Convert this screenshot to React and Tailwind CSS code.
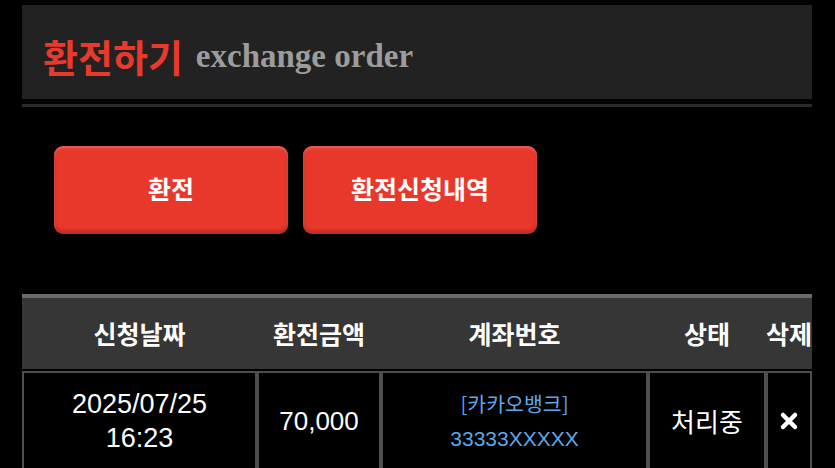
/**
 * ExchangeOrder — 환전하기 page with action buttons and request history table.
 */

const rows = [
  {
    id: 1,
    date: "2025/07/25",
    time: "16:23",
    amount: "70,000",
    bank: "[카카오뱅크]",
    account: "33333XXXXX",
    status: "처리중",
  },
];

const ko = "font-['Noto_Sans_CJK_KR','Noto_Sans',sans-serif]";
const latin = "font-['Liberation_Sans','Noto_Sans_CJK_KR',sans-serif]";

export default function App() {
  return (
    <div className="min-h-[468px] bg-black pt-[5px]">
      <div className="ml-[22px] w-[790px]">
        <div className="flex h-[94px] items-center bg-[#222222] pl-[21px] pt-[8px]">
          <span className={`${ko} text-[38px] font-bold leading-none text-[#e8392d]`}>
            환전하기
          </span>
          <span className="ml-[13px] font-['Liberation_Serif',serif] text-[33px] font-bold leading-none text-[#9c9c9c]">
            exchange order
          </span>
        </div>
        <div className="mt-[5px] h-[3px] bg-[#2c2c2c]" />

        <div className="mt-[39px] flex gap-[15px] pl-[32px]">
          <ActionButton>환전</ActionButton>
          <ActionButton>환전신청내역</ActionButton>
        </div>

        <HistoryTable rows={rows} />
      </div>
    </div>
  );
}

function ActionButton({ children }) {
  return (
    <button
      className={`${ko} flex h-[88px] w-[234px] items-center justify-center rounded-[9px] bg-[#e8382c] pb-[2px] text-[25px] font-bold text-white shadow-[inset_0_2px_3px_rgba(255,255,255,0.22),inset_0_-3px_4px_rgba(0,0,0,0.22)]`}
    >
      {children}
    </button>
  );
}

function HistoryTable({ rows }) {
  return (
    <table className="mt-[60px] w-[790px] table-fixed border-separate border-spacing-0">
      <colgroup>
        <col className="w-[235px]" />
        <col className="w-[124px]" />
        <col className="w-[267px]" />
        <col className="w-[118px]" />
        <col className="w-[46px]" />
      </colgroup>
      <thead>
        <tr className={`${ko} text-[25px] font-bold text-white`}>
          {["신청날짜", "환전금액", "계좌번호", "상태", "삭제"].map((h) => (
            <th
              key={h}
              className="h-[77px] whitespace-nowrap border-t-4 border-b-2 border-t-[#6b6b6b] border-b-black bg-[#363636] p-0 text-center font-bold"
            >
              {h}
            </th>
          ))}
        </tr>
      </thead>
      <tbody>
        {rows.map((r) => (
          <tr key={r.id} className="text-white">
            <td className={`${latin} h-[110px] border-2 border-[#4e4e4e] pb-[10px] text-center text-[27px] leading-[34px]`}>
              {r.date}
              <br />
              {r.time}
            </td>
            <td className={`${latin} border-2 border-[#4e4e4e] pb-[10px] text-center text-[26px]`}>
              {r.amount}
            </td>
            <td className="border-2 border-[#4e4e4e] pb-[10px] text-center leading-[36px] text-[#5fa6e8]">
              <div className={`${ko} text-[20.5px]`}>{r.bank}</div>
              <div className={`${latin} text-[21px]`}>{r.account}</div>
            </td>
            <td className={`${ko} border-2 border-[#4e4e4e] pb-[12px] text-center text-[26px]`}>
              {r.status}
            </td>
            <td className="border-2 border-[#4e4e4e] pb-[10px] text-center">
              <svg viewBox="0 0 20 20" className="mx-auto h-[20px] w-[20px]">
                <path
                  d="M4 4 L16 16 M16 4 L4 16"
                  stroke="white"
                  strokeWidth="4.5"
                  strokeLinecap="round"
                  fill="none"
                />
              </svg>
            </td>
          </tr>
        ))}
      </tbody>
    </table>
  );
}
